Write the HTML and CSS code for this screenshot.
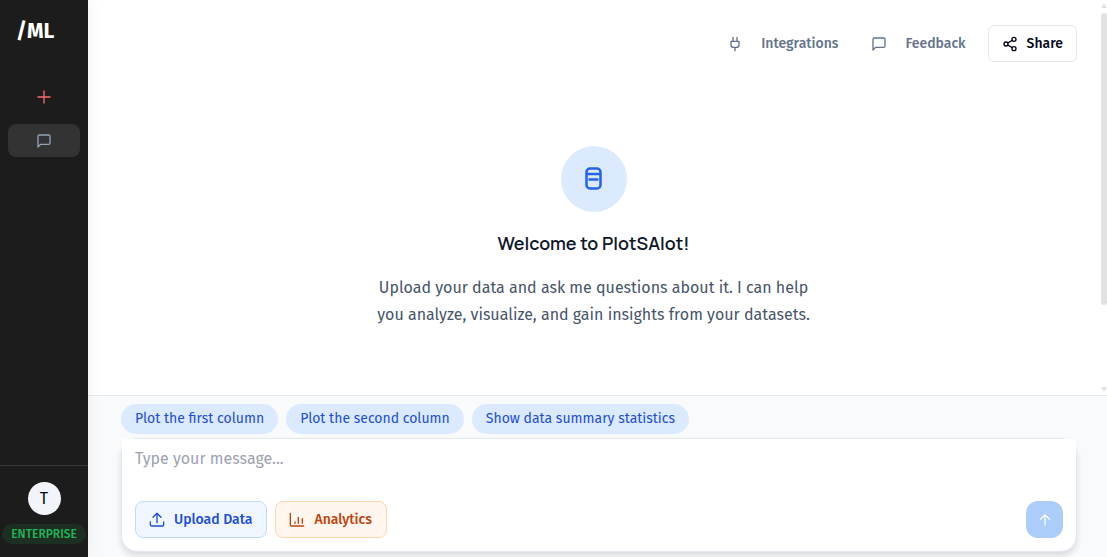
FILE: index.html
```html
<!DOCTYPE html>
<html lang="en">
<head>
  <meta charset="UTF-8">
  <meta name="viewport" content="width=device-width, initial-scale=1">
  <title>PlotSAlot</title>
  <link rel="stylesheet" href="styles.css">
</head>
<body>

  <aside class="sidebar">
    <a href="#" class="logo">/ML</a>

    <nav class="side-nav">
      <button type="button" class="side-btn new-chat" aria-label="New chat">
        <svg class="icon" viewBox="0 0 24 24"><path d="M12 3v18M3 12h18"/></svg>
      </button>
      <button type="button" class="side-btn active" aria-label="Chat">
        <svg class="icon" viewBox="0 0 24 24"><path d="M21 15a2 2 0 0 1-2 2H7l-4 4V5a2 2 0 0 1 2-2h14a2 2 0 0 1 2 2z"/></svg>
      </button>
    </nav>

    <div class="account">
      <button type="button" class="avatar">T</button>
      <span class="plan">ENTERPRISE</span>
    </div>
  </aside>

  <main class="main">
    <section class="chat">
      <header class="topbar">
        <nav class="top-links">
          <a href="#" class="top-link">
            <svg class="icon" viewBox="0 0 24 24"><path d="M12 22v-5M9 8V2M15 8V2M18 8v5a4 4 0 0 1-4 4h-4a4 4 0 0 1-4-4V8z"/></svg>
            Integrations
          </a>
          <a href="#" class="top-link">
            <svg class="icon" viewBox="0 0 24 24"><path d="M21 15a2 2 0 0 1-2 2H7l-4 4V5a2 2 0 0 1 2-2h14a2 2 0 0 1 2 2z"/></svg>
            Feedback
          </a>
        </nav>
        <button type="button" class="share">
          <svg class="icon" viewBox="0 0 24 24"><circle cx="18" cy="5" r="3"/><circle cx="6" cy="12" r="3"/><circle cx="18" cy="19" r="3"/><path d="M8.600 13.500l6.800 4M15.400 6.500l-6.800 4"/></svg>
          Share
        </button>
      </header>

      <div class="welcome">
        <div class="welcome-icon">
          <svg viewBox="0 0 28 28"><path d="M10 3.500h7a3.500 3.500 0 0 1 3.500 3.500v13a3.500 3.500 0 0 1-3.500 3.500h-7A3.500 3.500 0 0 1 6.500 20V7A3.500 3.500 0 0 1 10 3.500zM7 9h13M9.500 14.500h8"/></svg>
        </div>
        <h1>Welcome to PlotSAlot!</h1>
        <p>Upload your data and ask me questions about it. I can help you analyze, visualize, and gain insights from your datasets.</p>
      </div>

      <div class="scrollbar" aria-hidden="true">
        <span class="arrow up"></span>
        <span class="thumb"></span>
        <span class="arrow down"></span>
      </div>
    </section>

    <section class="composer">
      <div class="suggestions">
        <button type="button" class="chip">Plot the first column</button>
        <button type="button" class="chip">Plot the second column</button>
        <button type="button" class="chip">Show data summary statistics</button>
      </div>

      <form class="message-box">
        <textarea class="message" rows="1" placeholder="Type your message..." aria-label="Message"></textarea>
        <div class="tools">
          <button type="button" class="tool upload">
            <svg class="icon" viewBox="0 0 24 24"><path d="M2 15v4a2 2 0 0 0 2 2h16a2 2 0 0 0 2-2v-4M12 16V3M6 8l6-6 6 6"/></svg>
            Upload Data
          </button>
          <button type="button" class="tool analytics">
            <svg class="icon" viewBox="0 0 24 24"><path d="M2 2v17a2 2 0 0 0 2 2h18M9 17v-2M14 17V8M20 17v-7"/></svg>
            Analytics
          </button>
          <button type="submit" class="send" aria-label="Send">
            <svg class="icon" viewBox="0 0 24 24"><path d="M12 21V3M4 11l8-8 8 8"/></svg>
          </button>
        </div>
      </form>
    </section>
  </main>

</body>
</html>
```
FILE: styles.css
```css
* {
  box-sizing: border-box;
}
body {
  margin: 0;
  height: 100vh;
  display: flex;
  overflow: hidden;
  font-family: 'Fira Sans', 'Noto Sans', sans-serif;
  font-size: 14px;
  color: #0f172a;
  background: #fff;
}
button {
  font: inherit;
  border: none;
  cursor: pointer;
}
a {
  text-decoration: none;
}
.icon {
  width: 16px;
  height: 16px;
  flex: none;
}
svg {
  fill: none;
  stroke: currentColor;
  stroke-width: 2;
  stroke-linecap: round;
  stroke-linejoin: round;
}

/* Sidebar */
.sidebar {
  width: 88px;
  flex: none;
  display: flex;
  flex-direction: column;
  background: #1c1c1c;
  box-shadow: 0 0 16px rgba(0,0,0,0.06);
  z-index: 1;
}
.logo {
  padding: 16px;
  font-size: 21px;
  line-height: 30px;
  font-weight: bold;
  color: #fff;
}
.side-nav {
  flex: 1;
  display: flex;
  flex-direction: column;
  gap: 11px;
  padding: 18px 8px;
}
.side-btn {
  height: 33px;
  display: flex;
  align-items: center;
  justify-content: center;
  border-radius: 8px;
  background: none;
  color: #94a3b8;
}
.side-btn.active {
  background: #333;
}
.new-chat {
  color: #f86b6b;
}
.account {
  display: flex;
  flex-direction: column;
  align-items: center;
  gap: 9px;
  padding: 16px 0 13px;
  border-top: 1px solid #383838;
}
.avatar {
  width: 33px;
  height: 33px;
  padding: 0;
  border-radius: 50%;
  background: #f1f5f9;
  font-size: 16px;
  color: #020617;
}
.plan {
  padding: 0 9px;
  border-radius: 10px;
  background: #1d2e23;
  font-size: 12px;
  line-height: 20px;
  font-weight: 500;
  color: #22b455;
}

/* Chat area */
.main {
  flex: 1;
  min-width: 0;
  display: flex;
  flex-direction: column;
}
.chat {
  position: relative;
  flex: 1;
  display: flex;
  flex-direction: column;
}
.topbar {
  display: flex;
  justify-content: flex-end;
  align-items: center;
  gap: 22px;
  padding: 25px 30px 0 0;
}
.top-links {
  display: flex;
  gap: 33px;
}
.top-link {
  display: flex;
  align-items: center;
  gap: 18px;
  font-weight: 500;
  color: #64748b;
}
.share {
  display: flex;
  align-items: center;
  gap: 9px;
  height: 37px;
  padding: 0 13px;
  border: 1px solid #e2e8f0;
  border-radius: 6px;
  background: #fff;
  font-weight: 500;
  color: #020617;
}
.welcome {
  display: flex;
  flex-direction: column;
  align-items: center;
  padding: 84px 32px 0 24px;
  text-align: center;
}
.welcome-icon {
  width: 66px;
  height: 66px;
  display: flex;
  align-items: center;
  justify-content: center;
  border-radius: 50%;
  background: #dbeafe;
  color: #2563eb;
}
.welcome-icon svg {
  width: 28px;
  height: 28px;
  stroke-width: 2.5;
}
.welcome h1 {
  margin: 16px 0;
  font-family: Manrope, Inter, sans-serif;
  font-size: 18px;
  line-height: 30px;
  font-weight: 600;
}
.welcome p {
  max-width: 450px;
  margin: 0;
  font-size: 16px;
  line-height: 27px;
  color: #475569;
}

.scrollbar {
  position: absolute;
  top: 0;
  right: 0;
  bottom: 0;
  width: 6px;
  padding: 3px 0;
  display: flex;
  flex-direction: column;
  gap: 5px;
}
.thumb {
  height: 75%;
  border-radius: 3px;
  background: #e2e2e2;
}
.arrow {
  border: 3px solid transparent;
}
.arrow.up {
  border-top: none;
  border-bottom: 5px solid #e2e2e2;
}
.arrow.down {
  margin-top: auto;
  border-bottom: none;
  border-top: 5px solid #e2e2e2;
}

/* Composer */
.composer {
  padding: 8px 30px 5px 33px;
  border-top: 1px solid #e2e8f0;
  background: #f8fafc;
}
.suggestions {
  display: flex;
  gap: 8px;
  margin-bottom: 4px;
}
.chip {
  padding: 0 14px;
  border-radius: 15px;
  background: #dbeafe;
  line-height: 30px;
  color: #1d4ed8;
}
.message-box {
  border: 1px solid #e2e8f0;
  border-radius: 16px;
  background: #fff;
  box-shadow: 0 4px 6px rgba(0,0,0,0.12);
}
.message {
  display: block;
  width: 100%;
  height: 62px;
  padding: 7px 13px;
  border: none;
  outline: none;
  resize: none;
  font: inherit;
  font-size: 16px;
  line-height: 26px;
  background: #fff;
}
.message::placeholder {
  color: #9ca3af;
}
.tools {
  display: flex;
  gap: 8px;
  padding: 0 13px 13px;
}
.tool {
  display: flex;
  align-items: center;
  gap: 9px;
  height: 37px;
  padding: 0 14px 0 13px;
  border: 1px solid;
  border-radius: 8px;
  font-weight: 500;
}
.upload {
  border-color: #bfdbfe;
  background: #eff6ff;
  color: #1d4ed8;
}
.analytics {
  border-color: #fed7aa;
  background: #fff7ed;
  color: #c2410c;
}
.send {
  width: 37px;
  height: 37px;
  margin-left: auto;
  padding: 0;
  display: flex;
  align-items: center;
  justify-content: center;
  border-radius: 12px;
  background: #accdf9;
  color: #fff;
}
.send .icon {
  width: 14px;
  height: 14px;
}
```
